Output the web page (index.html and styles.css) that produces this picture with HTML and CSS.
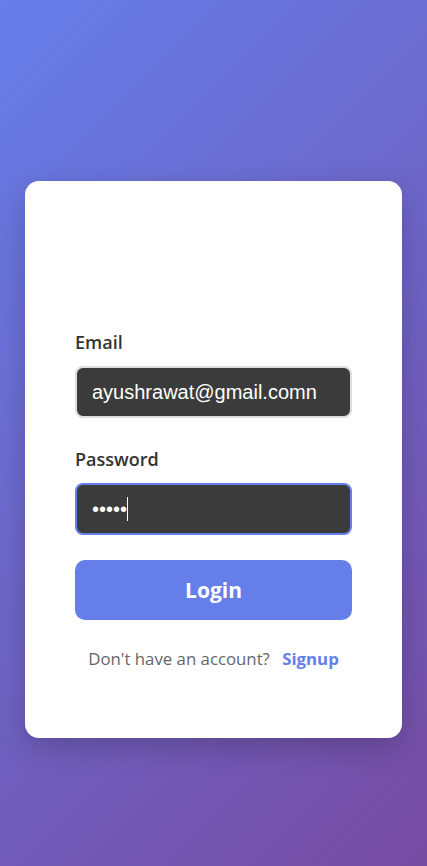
FILE: index.html
```html
<!DOCTYPE html>
<html lang="en">
<head>
<meta charset="utf-8">
<title>Login</title>
<link rel="stylesheet" href="styles.css">
</head>
<body>
<main class="page">
  <form class="card">
    <div class="field">
      <label class="label" for="email">Email</label>
      <input class="input" id="email" type="email" value="ayushrawat@gmail.comn">
    </div>
    <div class="field">
      <label class="label" for="password">Password</label>
      <div class="input-wrap">
        <input class="input input-focused" id="password" type="password" value="abcde">
        <span class="caret"></span>
      </div>
    </div>
    <button class="btn" type="button">Login</button>
    <p class="switch">Don't have an account? <a class="switch-link" href="#">Signup</a></p>
  </form>
</main>
</body>
</html>
```
FILE: styles.css
```css
* { box-sizing: border-box; }
html, body { margin: 0; height: 100%; }
body {
  background: linear-gradient(135deg, #667eea 0%, #764ba2 100%);
  font-family: "Open Sans", "Noto Sans", sans-serif;
  color: #333;
}
.page {
  min-height: 100%;
  padding: 181px 25px 0;
  display: flex;
  flex-direction: column;
}
.card {
  background: #fff;
  border-radius: 14px;
  box-shadow: 0 10px 30px rgba(0,0,0,0.2);
  padding: 148px 50px 67px;
  display: flex;
  flex-direction: column;
}
.field {
  display: flex;
  flex-direction: column;
  margin-bottom: 31px;
}
.field + .field { margin-bottom: 25px; }
.label {
  font-size: 18px;
  line-height: 26px;
  font-weight: 600;
  color: #333;
  margin-bottom: 11px;
}
.field + .field .label { margin-top: -3px; margin-bottom: 11px; }
.input-wrap { position: relative; }
.input {
  width: 100%;
  height: 52px;
  border: 2px solid #ddd;
  border-radius: 8px;
  background: #3b3b3b;
  color: #fff;
  font-family: "Liberation Sans", Arial, sans-serif;
  font-size: 20px;
  padding: 0 15px;
  outline: none;
}
.input-focused { border-color: #667eea; }
.caret {
  position: absolute;
  left: 52px;
  top: 14px;
  width: 1px;
  height: 24px;
  background: #fff;
}
.btn {
  height: 60px;
  border: 0;
  border-radius: 10px;
  background: #667eea;
  color: #fff;
  font-family: inherit;
  font-size: 21px;
  font-weight: 700;
}
.switch {
  margin: 27px 0 0;
  text-align: center;
  font-size: 16.8px;
  line-height: 24px;
  color: #666;
}
.switch-link {
  color: #667eea;
  font-weight: 700;
  text-decoration: none;
  margin-left: 8px;
}
```
